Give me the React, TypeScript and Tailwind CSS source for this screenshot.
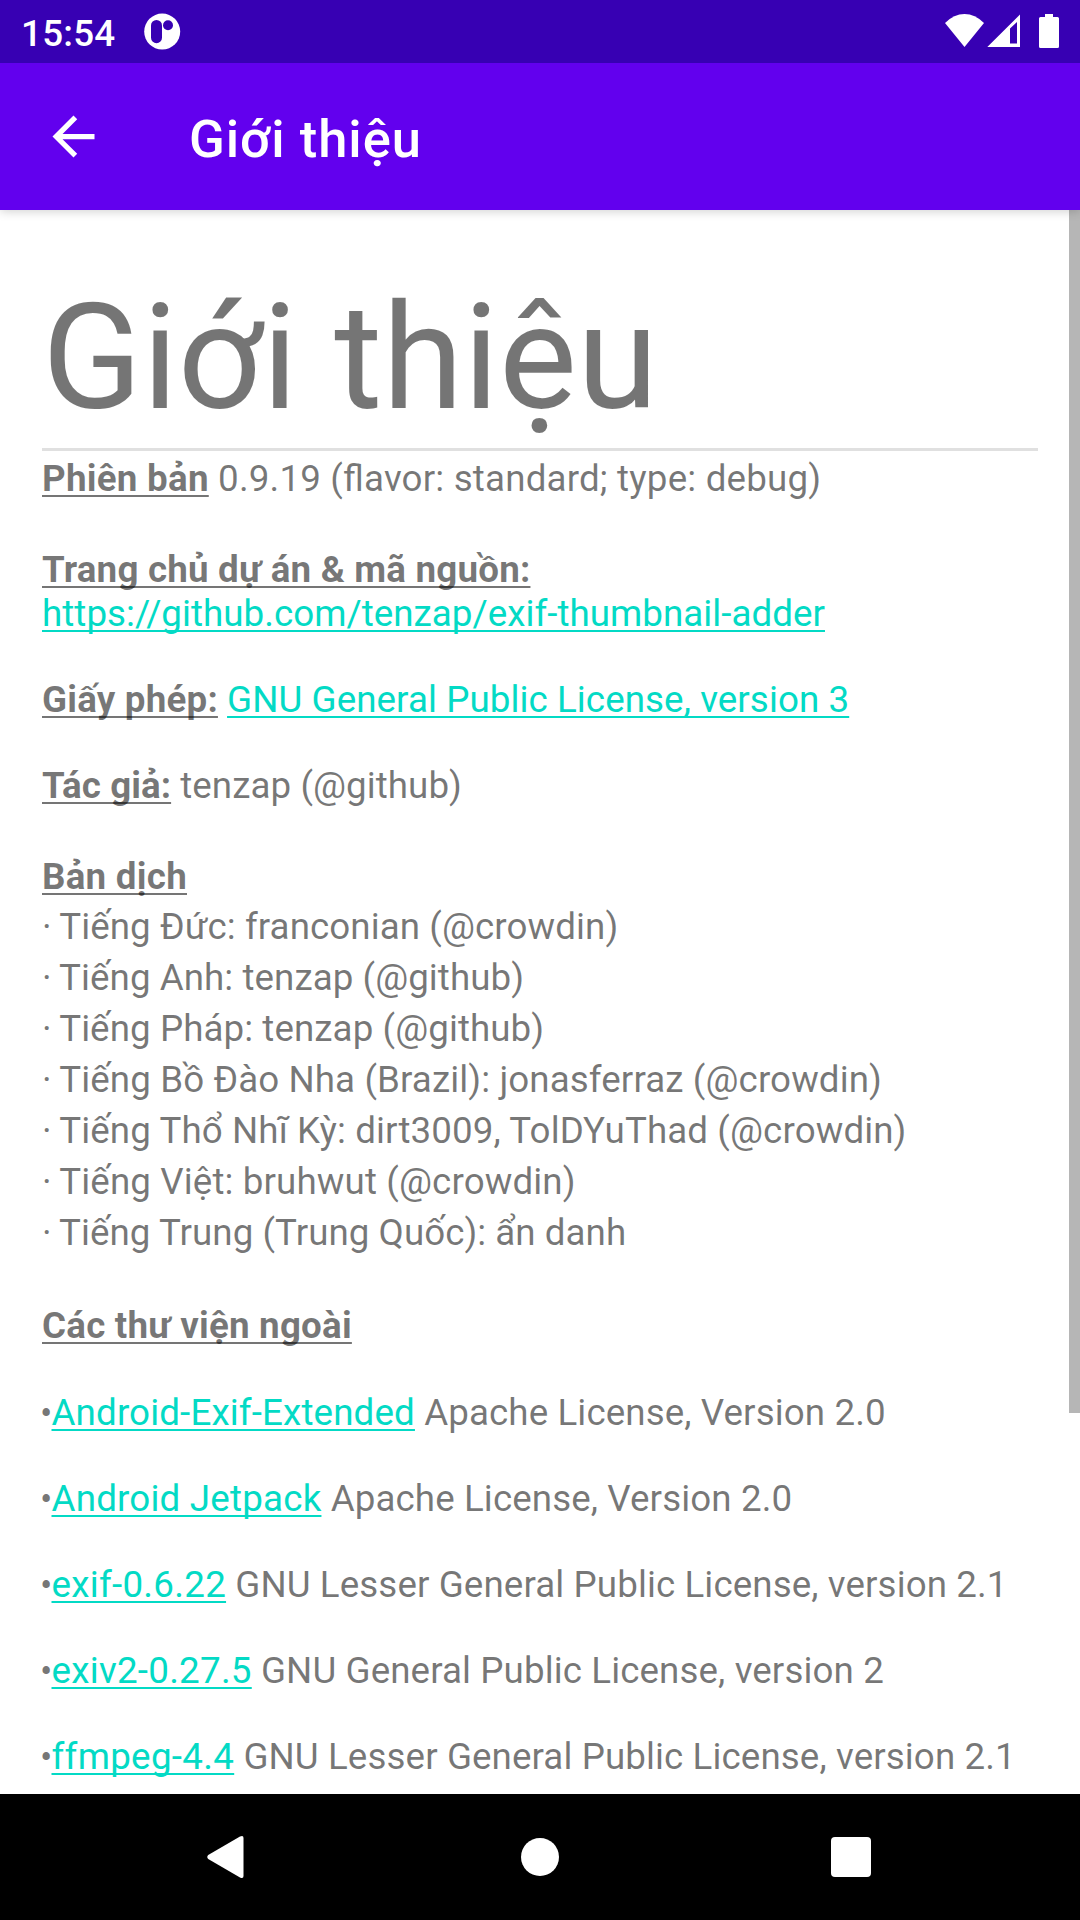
import type { ReactNode } from "react";

const translations = [
  { text: "Tiếng Đức: franconian (@crowdin)", tracking: "tracking-[0.07px]" },
  { text: "Tiếng Anh: tenzap (@github)", tracking: "tracking-[0.04px]" },
  { text: "Tiếng Pháp: tenzap (@github)", tracking: "tracking-[0.06px]" },
  { text: "Tiếng Bồ Đào Nha (Brazil): jonasferraz (@crowdin)", tracking: "tracking-[0.09px]" },
  { text: "Tiếng Thổ Nhĩ Kỳ: dirt3009, TolDYuThad (@crowdin)", tracking: "tracking-[0.09px]" },
  { text: "Tiếng Việt: bruhwut (@crowdin)", tracking: "tracking-[0.11px]" },
  { text: "Tiếng Trung (Trung Quốc): ẩn danh", tracking: "tracking-[0.03px]" },
];

const libraries = [
  { name: "Android-Exif-Extended", license: "Apache License, Version 2.0", tracking: "tracking-[0.13px]" },
  { name: "Android Jetpack", license: "Apache License, Version 2.0", tracking: "tracking-[0.19px]" },
  { name: "exif-0.6.22", license: "GNU Lesser General Public License, version 2.1", tracking: "tracking-[0.27px]" },
  { name: "exiv2-0.27.5", license: "GNU General Public License, version 2", tracking: "tracking-[0.25px]" },
  { name: "ffmpeg-4.4", license: "GNU Lesser General Public License, version 2.1", tracking: "tracking-[0.3px]" },
];

function Label({ children, tracking = "tracking-[0.2px]" }: { children: ReactNode; tracking?: string }) {
  return (
    <b
      className={`font-bold underline decoration-[2px] underline-offset-[4px] [text-decoration-skip-ink:none] ${tracking}`}
    >
      {children}
    </b>
  );
}

function Link({ children, tracking = "tracking-[0.07px]" }: { children: ReactNode; tracking?: string }) {
  return (
    <a
      className={`text-[#03dac5] underline decoration-[2px] underline-offset-[4px] [text-decoration-skip-ink:none] ${tracking}`}
    >
      {children}
    </a>
  );
}

function StatusBar() {
  return (
    <div className="relative z-20 flex h-[63px] shrink-0 items-start bg-[#3700b3] text-white">
      <span className="mt-[12px] ml-[21px] w-[123px] text-[36.75px] leading-[43px] font-medium tracking-[0.25px]">
        15:54
      </span>
      <svg className="mt-[13px]" width="37" height="37" viewBox="0 0 37 37">
        <circle cx="18.2" cy="18.6" r="18" fill="#fff" />
        <rect x="7" y="7" width="11" height="23.2" rx="5.5" fill="#3700b3" />
        <circle cx="24" cy="12.2" r="5" fill="#3700b3" />
      </svg>
      <svg className="mt-[13px] ml-auto" width="135" height="36" viewBox="0 0 135 36">
        <path d="M0 10Q9 1 19.500 1T39 10L19.500 34Z" fill="#fff" />
        <path fillRule="evenodd" d="M75 1.500V34H42.300ZM72 9L65 15.500V30.500H72Z" fill="#fff" />
        <path
          d="M100 1h8v3h4.500q1.500 0 1.500 1.500v28q0 1.500-1.500 1.500h-17q-1.500 0-1.500-1.500v-28q0-1.500 1.500-1.500h4.500z"
          fill="#fff"
        />
      </svg>
    </div>
  );
}

function AppBar() {
  return (
    <header className="relative z-10 flex h-[147px] shrink-0 items-center bg-[#6200ee] text-white shadow-[0_1px_10px_rgba(0,0,0,0.2)]">
      <svg className="ml-[42px]" width="63" height="63" viewBox="0 0 24 24" fill="#fff">
        <path d="M20 11H7.830l5.590-5.590L12 4l-8 8 8 8 1.410-1.410L7.830 13H20z" />
      </svg>
      <h1 className="mt-[5px] ml-[84px] text-[52.5px] leading-[62px] font-medium tracking-[0.98px]">Giới thiệu</h1>
    </header>
  );
}

function NavBar() {
  return (
    <nav className="flex h-[126px] shrink-0 items-center bg-black">
      <svg className="ml-[207px]" width="37" height="44" viewBox="0 0 37 44" fill="#fff">
        <path d="M1.200 20L33 1.600Q36.500 0 36.500 3V41Q36.500 44 33 42.400L1.200 24Q-.7 22 1.200 20Z" />
      </svg>
      <div className="ml-[277px] size-[38px] rounded-full bg-white" />
      <div className="ml-[272px] size-[40px] rounded-[4px] bg-white" />
    </nav>
  );
}

export default function App() {
  return (
    <div className="flex h-[1920px] w-[1080px] flex-col overflow-hidden bg-white font-['Roboto',sans-serif]">
      <StatusBar />
      <AppBar />
      <main className="relative h-[1584px] shrink-0 overflow-hidden px-[42px] text-[36.75px] leading-[43px] whitespace-nowrap text-black/54">
        <h2 className="pt-[62px] text-[147px] leading-[172px]">Giới thiệu</h2>
        <hr className="mt-[4px] border-t-[3px] border-[#e0e0e0]" />
        <p className="mt-[6px] tracking-[0.17px]">
          <Label tracking="tracking-[0.25px]">Phiên bản</Label> 0.9.19 (<span className="tracking-normal">fl</span>avor:
          standard; type: debug)
        </p>
        <p className="mt-[48px]">
          <Label tracking="tracking-[0.18px]">Trang chủ dự án &amp; mã nguồn:</Label>
        </p>
        <p className="mt-px">
          <Link tracking="tracking-[0.03px]">https://github.com/tenzap/exif-thumbnail-adder</Link>
        </p>
        <p className="mt-[43px]">
          <Label>Giấy phép:</Label> <Link>GNU General Public License, version 3</Link>
        </p>
        <p className="mt-[43px] tracking-[0.05px]">
          <Label tracking="tracking-[0.04px]">Tác giả:</Label> tenzap (@github)
        </p>
        <p className="mt-[48px]">
          <Label tracking="tracking-[0.25px]">Bản dịch</Label>
        </p>
        <ul className="mt-[7px] flex flex-col gap-[8px]">
          {translations.map((t) => (
            <li key={t.text} className={t.tracking}>
              <span className="mr-[-1px]">·</span> {t.text}
            </li>
          ))}
        </ul>
        <p className="mt-[50px]">
          <Label tracking="tracking-[0.21px]">Các thư viện ngoài</Label>
        </p>
        <ul className="mt-[44px] flex flex-col gap-[43px]">
          {libraries.map((l) => (
            <li key={l.name} className="tracking-[0.09px]">
              <span className="relative top-px mr-[-1px] ml-[-2px]">•</span>
              <Link tracking={l.tracking}>{l.name}</Link> {l.license}
            </li>
          ))}
        </ul>
        <div className="absolute top-0 right-0 h-[1203px] w-[11px] bg-[#b6b6b6]" />
      </main>
      <NavBar />
    </div>
  );
}
